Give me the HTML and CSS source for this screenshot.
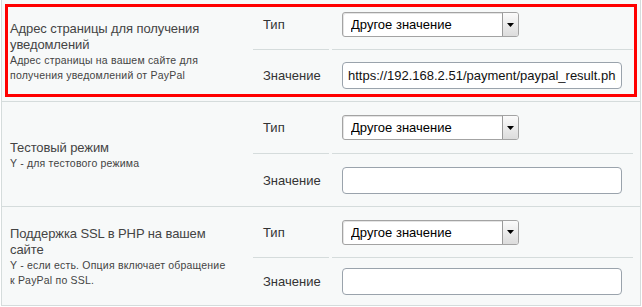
FILE: index.html
```html
<!DOCTYPE html>
<html lang="ru">
<head>
    <meta charset="UTF-8">
    <meta name="viewport" content="width=device-width, initial-scale=1.0">
    <title>PayPal settings</title>
    <link rel="stylesheet" href="styles.css">
</head>
<body>

    <div class="settings">

        <!-- Notify URL -->
        <div class="setting setting-notify highlighted">
            <div class="setting-label">
                <div class="setting-title">Адрес страницы для получения уведомлений</div>
                <div class="setting-desc">Адрес страницы на вашем сайте для получения уведомлений от PayPal</div>
            </div>
            <div class="field-name">Тип</div>
            <div class="field-control">
                <div class="select-wrap">
                    <select><option>Другое значение</option></select>
                    <span class="select-arrow"><svg width="7" height="4" viewBox="0 0 7 4"><path d="M0 0H7L3.5 4Z" fill="#000"/></svg></span>
                </div>
            </div>
            <div class="field-name last">Значение</div>
            <div class="field-control last">
                <input type="text" value="https://192.168.2.51/payment/paypal_result.php">
            </div>
        </div>

        <!-- Test mode -->
        <div class="setting setting-test">
            <div class="setting-label">
                <div class="setting-title">Тестовый режим</div>
                <div class="setting-desc">Y - для тестового режима</div>
            </div>
            <div class="field-name">Тип</div>
            <div class="field-control">
                <div class="select-wrap">
                    <select><option>Другое значение</option></select>
                    <span class="select-arrow"><svg width="7" height="4" viewBox="0 0 7 4"><path d="M0 0H7L3.5 4Z" fill="#000"/></svg></span>
                </div>
            </div>
            <div class="field-name last">Значение</div>
            <div class="field-control last">
                <input type="text" value="">
            </div>
        </div>

        <!-- SSL -->
        <div class="setting setting-ssl">
            <div class="setting-label">
                <div class="setting-title">Поддержка SSL в PHP на вашем сайте</div>
                <div class="setting-desc">Y - если есть. Опция включает обращение к PayPal по SSL.</div>
            </div>
            <div class="field-name">Тип</div>
            <div class="field-control">
                <div class="select-wrap">
                    <select><option>Другое значение</option></select>
                    <span class="select-arrow"><svg width="7" height="4" viewBox="0 0 7 4"><path d="M0 0H7L3.5 4Z" fill="#000"/></svg></span>
                </div>
            </div>
            <div class="field-name last">Значение</div>
            <div class="field-control last">
                <input type="text" value="">
            </div>
        </div>

    </div>

</body>
</html>
```

FILE: styles.css
```css
body {
    margin: 0;
    background: #fff;
    font-family: "Liberation Sans", Arial, sans-serif;
    color: #333;
}
.settings {
    margin: 0 1px;
    border: 1px solid #d5dcdc;
    border-top: none;
    background: #f7f9f9;
}
.setting {
    display: grid;
    grid-template-columns: 251px 76px 1fr;
    grid-template-rows: 50px 51px;
    border-bottom: 1px solid #d5dcdc;
}
.setting:last-child {
    border-bottom: none;
}
.setting-test {
    grid-template-rows: 52px 52px;
}
.setting-ssl {
    grid-template-rows: 51px 47px;
}
.highlighted {
    position: relative;
}
.highlighted::after {
    content: "";
    position: absolute;
    top: 4px;
    left: 3px;
    right: 3px;
    bottom: 4px;
    border: 3px solid #f00;
    pointer-events: none;
}
.setting-label {
    grid-row: span 2;
    display: flex;
    flex-direction: column;
    justify-content: center;
    padding: 2px 22px 0 8px;
}
.setting-title {
    font-size: 13px;
    line-height: 16px;
    letter-spacing: -0.1px;
    color: #444;
}
.setting-desc {
    font-size: 10.5px;
    line-height: 15px;
    letter-spacing: 0.2px;
    color: #444;
}
.field-name {
    display: flex;
    align-items: center;
    padding-left: 10px;
    font-size: 13px;
    color: #333;
    border-bottom: 1px solid #d5dcdc;
}
.field-control {
    display: flex;
    align-items: center;
    margin: 0 7px 0 3px;
    padding-left: 10px;
    border-bottom: 1px solid #d5dcdc;
}
.field-name.last,
.field-control.last {
    border-bottom: none;
}
.select-wrap {
    position: relative;
    width: 177px;
    height: 25px;
}
.select-wrap select {
    appearance: none;
    -webkit-appearance: none;
    width: 100%;
    height: 100%;
    margin: 0;
    padding: 0 20px 0 8px;
    border: 1px solid #a3a3a3;
    border-radius: 3px;
    background: #fff;
    font-family: "Liberation Sans", Arial, sans-serif;
    font-size: 13px;
    color: #000;
    box-shadow: inset 1px 1px 0 #e4e4e4;
}
.select-arrow {
    position: absolute;
    top: 1px;
    right: 1px;
    bottom: 1px;
    width: 15px;
    display: flex;
    align-items: center;
    justify-content: center;
    border-left: 1px solid #9a9a9a;
    border-radius: 0 2px 2px 0;
    background: linear-gradient(#fbfbfb, #dcdcdc);
    pointer-events: none;
}
.field-control input {
    box-sizing: border-box;
    width: 280px;
    height: 27px;
    margin: 0;
    padding: 0 5px 0 5px;
    border: 1px solid #9aa3ac;
    border-radius: 4px;
    background: #fff;
    font-family: "Liberation Sans", Arial, sans-serif;
    font-size: 13px;
    color: #111;
    outline: none;
}
```
